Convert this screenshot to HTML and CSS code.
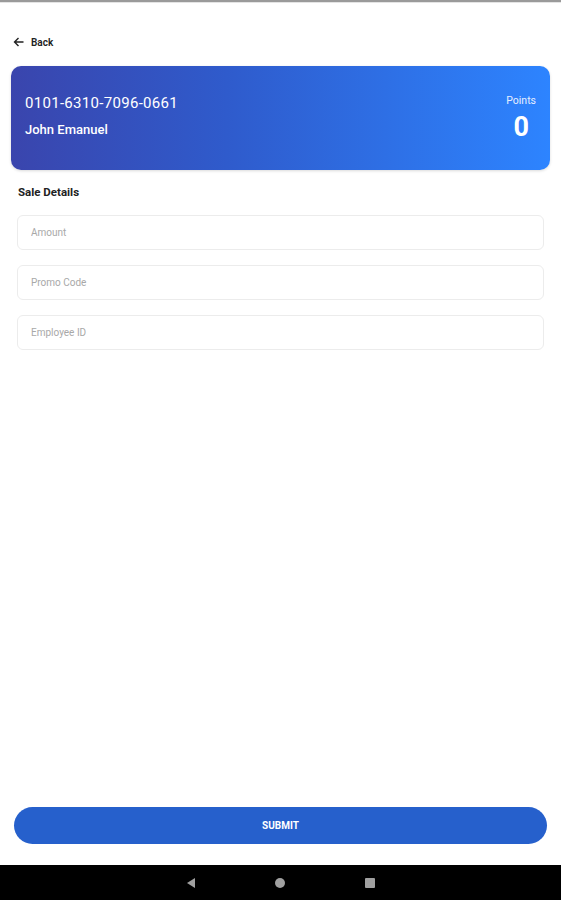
FILE: index.html
```html
<!DOCTYPE html>
<html lang="en">
<head>
    <meta charset="UTF-8">
    <meta name="viewport" content="width=device-width, initial-scale=1.0">
    <title>Sale Details</title>
    <link rel="stylesheet" href="styles.css">
</head>
<body>
    <div class="screen">
        <div class="statusLine"></div>

        <div class="topBar">
            <svg class="backIcon" width="11" height="10" viewBox="0 0 11 10">
                <path d="M10.5 5H1.5M5.5 1L1.5 5L5.5 9" fill="none" stroke="#222" stroke-width="1.4"/>
            </svg>
            <span class="backText">Back</span>
        </div>

        <div class="card">
            <div class="cardLeft">
                <div class="cardNumber">0101-6310-7096-0661</div>
                <div class="cardName">John Emanuel</div>
            </div>
            <div class="cardRight">
                <div class="pointsLabel">Points</div>
                <div class="pointsValue">0</div>
            </div>
        </div>

        <div class="sectionTitle">Sale Details</div>

        <div class="form">
            <input class="field" type="text" placeholder="Amount">
            <input class="field" type="text" placeholder="Promo Code">
            <input class="field" type="text" placeholder="Employee ID">
        </div>

        <div class="spacer"></div>

        <button class="submit">SUBMIT</button>

        <div class="navBar">
            <span class="navBack"></span>
            <span class="navHome"></span>
            <span class="navRecent"></span>
        </div>
    </div>
</body>
</html>
```

FILE: styles.css
```css
body {
    margin: 0;
    background: #fff;
    font-family: Roboto, "Noto Sans", sans-serif;
}
.screen {
    height: 900px;
    display: flex;
    flex-direction: column;
}
.statusLine {
    height: 2px;
    background: #9a9a9a;
    border-bottom: 1px solid #e4e4e4;
}
.topBar {
    display: flex;
    align-items: center;
    gap: 7px;
    padding: 31px 0 0 13px;
    height: 16px;
}
.backIcon {
    display: block;
}
.backText {
    font-size: 10px;
    font-weight: 600;
    color: #222;
}
.card {
    margin: 16px 11px 0 11px;
    height: 104px;
    border-radius: 10px;
    background: linear-gradient(90deg, #3a45ad 0%, #2f5bcc 40%, #2d84ff 100%);
    box-shadow: 0 1px 3px rgba(0, 0, 0, 0.15);
    display: flex;
    justify-content: space-between;
    align-items: flex-start;
    color: #fff;
    box-sizing: border-box;
    padding: 28px 14px 0 14px;
}
.cardNumber {
    font-size: 15px;
    font-weight: 400;
    letter-spacing: 0.3px;
}
.cardName {
    font-size: 13px;
    font-weight: 500;
    margin-top: 10px;
}
.cardRight {
    text-align: right;
    padding-top: 0;
}
.pointsLabel {
    font-size: 10.5px;
    color: #e6eeff;
}
.pointsValue {
    font-size: 27px;
    font-weight: 700;
    margin-top: 4px;
    padding-right: 7px;
}
.sectionTitle {
    font-size: 11.5px;
    font-weight: 700;
    color: #222;
    margin: 15px 0 0 18px;
}
.form {
    display: flex;
    flex-direction: column;
    gap: 15px;
    margin: 16px 17px 0 17px;
}
.field {
    height: 35px;
    box-sizing: border-box;
    border: 1px solid #ececec;
    border-radius: 6px;
    padding: 0 13px;
    font-family: Roboto, sans-serif;
    font-size: 10px;
    color: #333;
    background: #fff;
    outline: none;
}
.field::placeholder {
    color: #a8a8a8;
}
.spacer {
    flex: 1;
}
.submit {
    margin: 0 14px;
    height: 37px;
    border: none;
    border-radius: 19px;
    background: #2660cc;
    color: #fff;
    font-family: Roboto, sans-serif;
    font-size: 10px;
    font-weight: 700;
}
.navBar {
    margin-top: 21px;
    height: 35px;
    background: #000;
    display: flex;
    align-items: center;
    justify-content: center;
    gap: 80px;
}
.navBack {
    width: 0;
    height: 0;
    border-top: 5px solid transparent;
    border-bottom: 5px solid transparent;
    border-right: 8px solid #a0a0a0;
}
.navHome {
    width: 10px;
    height: 10px;
    border-radius: 50%;
    background: #a0a0a0;
}
.navRecent {
    width: 10px;
    height: 10px;
    background: #a0a0a0;
    border-radius: 1px;
}
```
